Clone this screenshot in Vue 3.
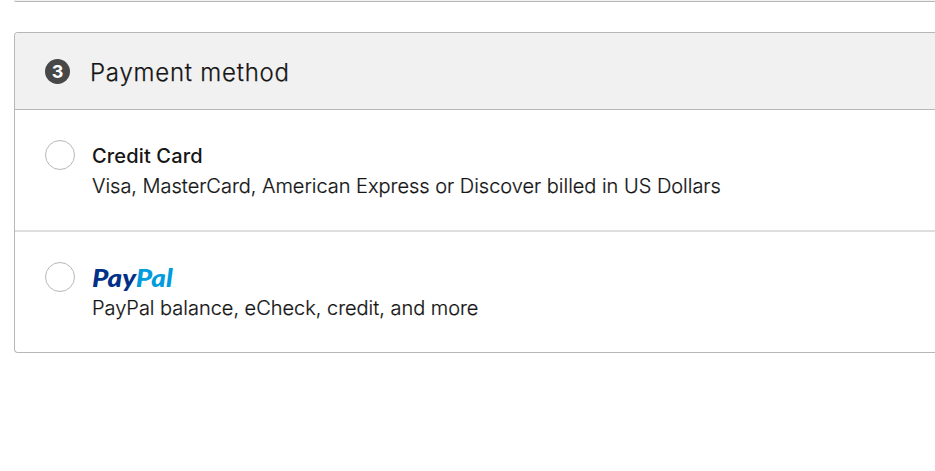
<script setup>
const methods = [
  { id: 'credit', title: 'Credit Card', detail: 'Visa, MasterCard, American Express or Discover billed in US Dollars' },
  { id: 'paypal', title: '', detail: 'PayPal balance, eCheck, credit, and more' },
]
</script>

<template>
  <main class="page">
    <section class="previous"></section>
    <section class="card">
      <header class="head">
        <span class="step">3</span>
        <h2 class="heading">Payment method</h2>
      </header>
      <div v-for="m in methods" :key="m.id" class="option" :class="m.id">
        <span class="radio"></span>
        <div class="copy">
          <div v-if="m.title" class="title">{{ m.title }}</div>
          <div v-else class="logo"><span class="pay">Pay</span><span class="pal">Pal</span></div>
          <div class="detail">{{ m.detail }}</div>
        </div>
      </div>
    </section>
  </main>
</template>

<style>
body { margin: 0; background: #fff; }
</style>

<style scoped>
.page {
  height: 471px;
  padding-left: 14px;
  overflow: hidden;
  box-sizing: border-box;
  font-family: Inter, "Liberation Sans", sans-serif;
  color: #151515;
}
.previous {
  height: 2px;
  box-sizing: border-box;
  border-bottom: 1px solid #b7b7b7;
  border-bottom-left-radius: 4px;
  background: #f1f1f1;
}
.card {
  margin-top: 30px;
  height: 321px;
  box-sizing: border-box;
  border: 1px solid #b7b7b7;
  border-right: 0;
  border-radius: 4px 0 0 4px;
  overflow: hidden;
}
.head {
  height: 77px;
  box-sizing: border-box;
  border-bottom: 1px solid #b7b7b7;
  background: #f1f1f1;
  display: flex;
  align-items: center;
  padding: 1px 0 0 30px;
}
.step {
  width: 25px;
  height: 25px;
  border-radius: 50%;
  background: #484848;
  color: #fff;
  font-size: 18px;
  font-weight: 700;
  line-height: 25px;
  text-align: center;
}
.heading {
  margin: 2px 0 0 20px;
  font-size: 24px;
  font-weight: 300;
  line-height: 32px;
  letter-spacing: 0.78px;
  white-space: nowrap;
  -webkit-text-stroke: 0.25px #151515;
}
.option {
  display: flex;
  height: 122px;
  box-sizing: border-box;
  padding: 30px 0 0 30px;
}
.credit { border-bottom: 2px solid #dedede; }
.radio {
  width: 30px;
  height: 30px;
  box-sizing: border-box;
  border: 1px solid #b7b7b7;
  border-radius: 50%;
}
.copy { margin-left: 17px; white-space: nowrap; }
.title, .logo, .detail { height: 30px; line-height: 30px; font-size: 20px; }
.title { font-weight: 500; padding-top: 1px; height: 29px; letter-spacing: 0.15px; }
.logo {
  width: max-content;
  font-family: Lato, sans-serif;
  font-size: 24px;
  font-weight: 900;
  font-style: italic;
  transform: translateY(1px) scaleX(1.16);
  transform-origin: left center;
}
.pay { color: #003087; }
.pal { color: #009cde; }
.detail {
  padding-top: 1px;
  font-weight: 300;
  letter-spacing: -0.02px;
  -webkit-text-stroke: 0.2px #151515;
}
</style>
